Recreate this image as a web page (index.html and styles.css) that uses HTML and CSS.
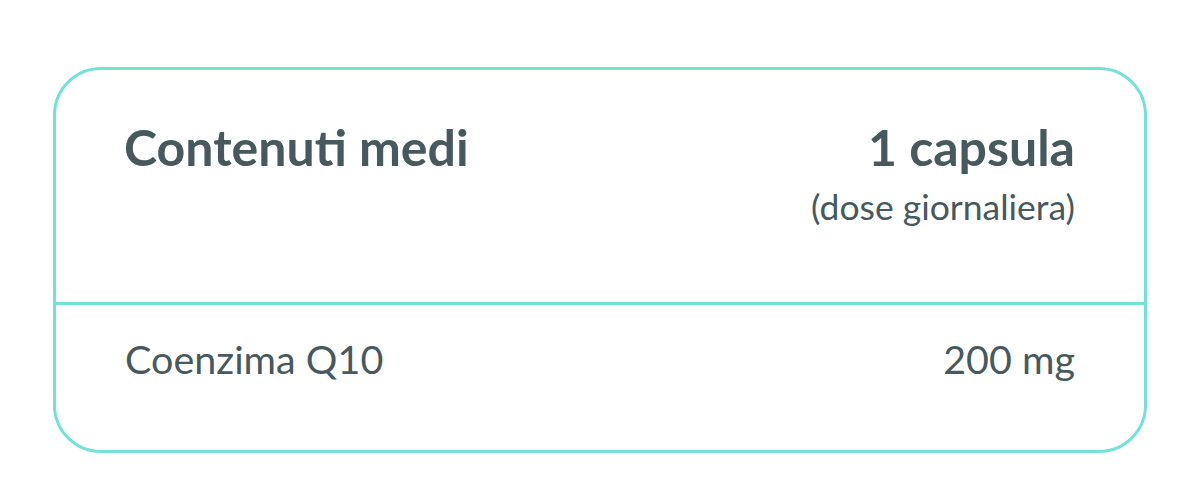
FILE: index.html
```html
<!DOCTYPE html>
<html lang="it">
<head>
<meta charset="utf-8">
<link rel="stylesheet" href="styles.css">
</head>
<body>
<div class="card">
  <div class="head">
    <div class="title">Contenuti medi</div>
    <div class="dose">
      <div class="dose-main">1 capsula</div>
      <div class="dose-sub">(dose giornaliera)</div>
    </div>
  </div>
  <div class="row">
    <div class="name">Coenzima Q10</div>
    <div class="value">200 mg</div>
  </div>
</div>
</body>
</html>
```
FILE: styles.css
```css
html, body {
  margin: 0;
  padding: 0;
  background: #ffffff;
}
body {
  font-family: Lato, "Open Sans", sans-serif;
  color: #47595d;
  padding: 67px 53px 0 53px;
}
.card {
  box-sizing: border-box;
  width: 1094px;
  height: 386px;
  border: 3px solid #72e1d6;
  border-radius: 48px;
  display: flex;
  flex-direction: column;
}
.head {
  box-sizing: border-box;
  height: 235px;
  padding: 47px 69px 0 68px;
  display: flex;
  justify-content: space-between;
  align-items: flex-start;
  border-bottom: 3px solid #72e1d6;
}
.title, .dose-main {
  font-size: 50px;
  font-weight: 700;
  line-height: 60px;
}
.dose {
  text-align: right;
}
.dose-sub {
  font-size: 35.5px;
  line-height: 60px;
}
.row {
  display: flex;
  justify-content: space-between;
  padding: 30px 69px 0 69px;
  font-size: 39.5px;
  line-height: 48px;
}
```
